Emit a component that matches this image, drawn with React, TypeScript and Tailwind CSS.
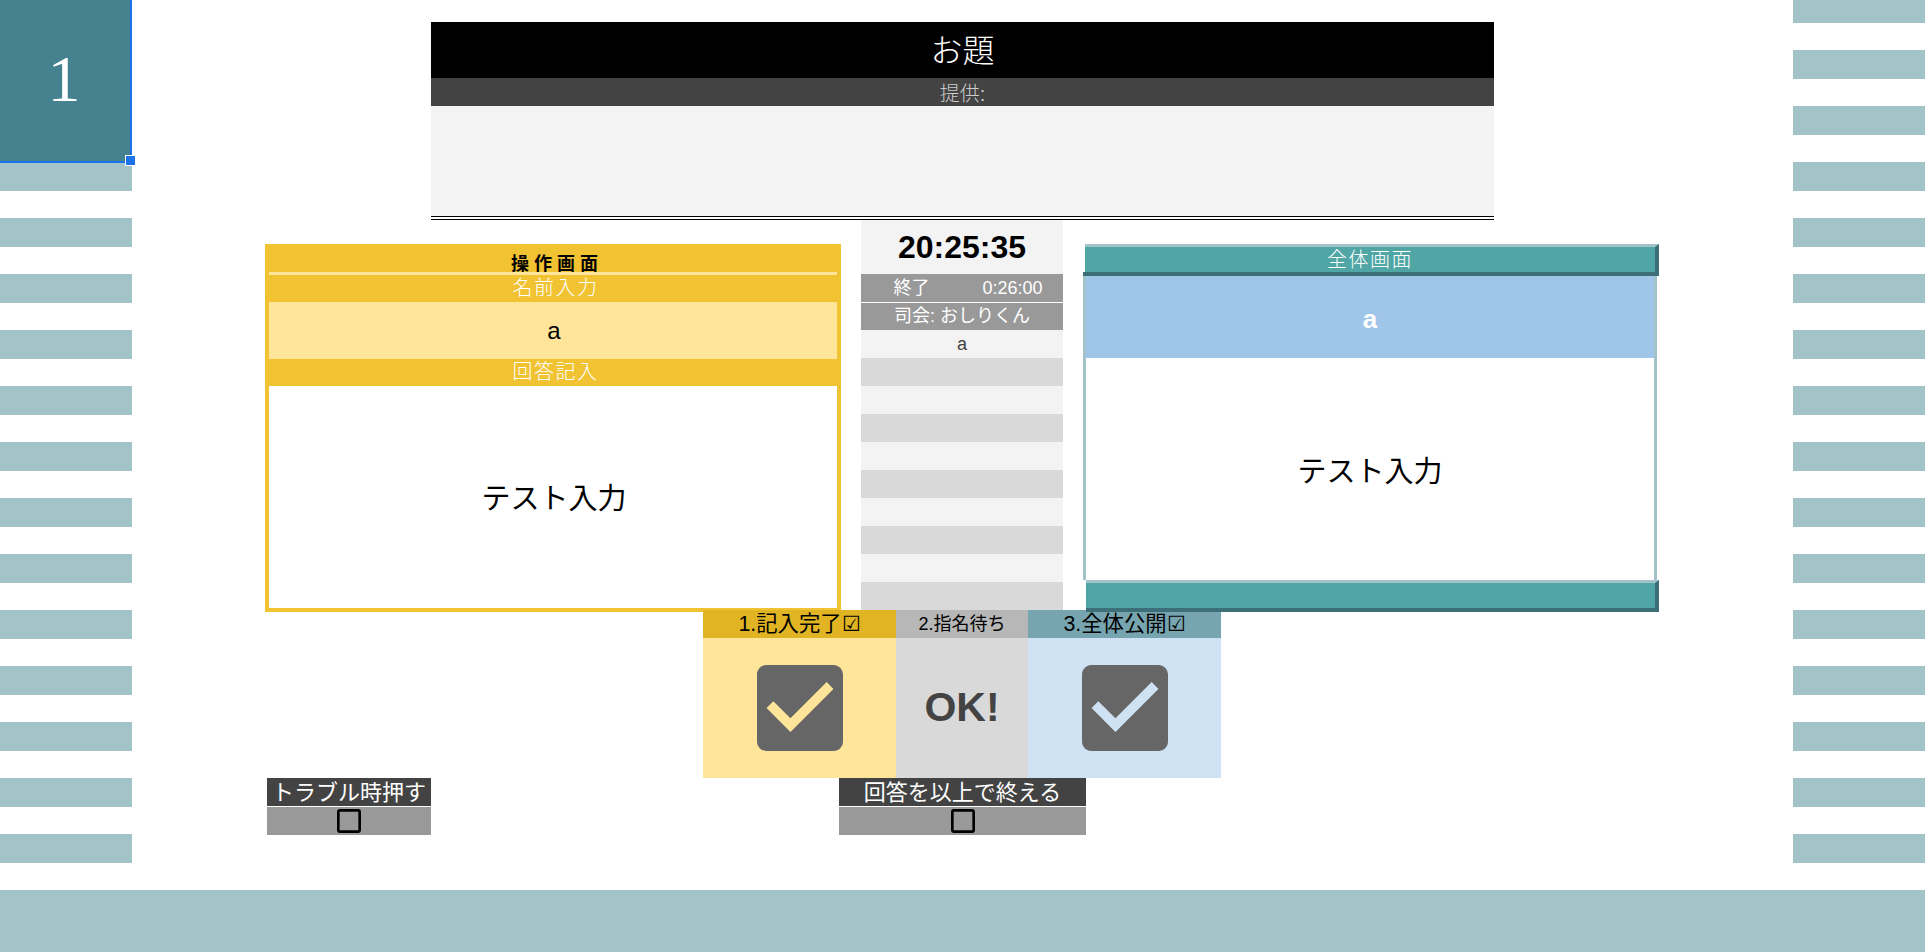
import React from 'react';

const leftStripes = Array.from({ length: 13 }, (_, i) => i);
const rightStripes = Array.from({ length: 15 }, (_, i) => i);
const listRows = ['a', '', '', '', '', '', '', '', '', ''];

function CheckedBox({ check }: { check: string }) {
    return (
        <div className={`w-[86px] h-[86px] ${check}`}>
            <svg viewBox="3 3 18 18" className="w-full h-full block">
                <path fill="currentColor" d="M5 5h14v14H5z" />
                <path
                    fill="#666666"
                    d="M19 3H5c-1.1 0-2 .9-2 2v14c0 1.1.9 2 2 2h14c1.1 0 2-.9 2-2V5c0-1.1-.9-2-2-2zm-9 14l-5-5 1.41-1.41L10 14.17l7.59-7.59L19 8l-9 9z"
                />
            </svg>
        </div>
    );
}

function EmptyBox() {
    return (
        <svg viewBox="3 3 18 18" className="w-6 h-6 block">
            <path
                fill="#000000"
                d="M19 5v14H5V5h14m0-2H5c-1.1 0-2 .9-2 2v14c0 1.1.9 2 2 2h14c1.1 0 2-.9 2-2V5c0-1.1-.9-2-2-2z"
            />
        </svg>
    );
}

function Toggle({ label, width }: { label: string; width: string }) {
    return (
        <div className={`${width} flex flex-col gap-px`}>
            <div className="h-[28px] bg-[#434343] text-white text-[22px] leading-[29px] text-center whitespace-nowrap">
                {label}
            </div>
            <div className="h-[28px] bg-[#999999] flex items-center justify-center">
                <EmptyBox />
            </div>
        </div>
    );
}

export default function App() {
    return (
        <div className="w-[1925px] h-[952px] overflow-hidden bg-white flex flex-col [font-family:'Liberation_Sans','Noto_Sans_CJK_JP',sans-serif]">
            <div className="h-[890px] flex">
                {/* left stripes */}
                <div className="w-[132px] shrink-0 flex flex-col">
                    <div className="relative z-10 h-[163px] -mb-px shrink-0 bg-[#45818e] border-r-2 border-b-2 border-[#1a73e8] flex items-center justify-center pb-[4px] pr-[2px] text-white text-[66px] [font-family:'Liberation_Serif',serif]">
                        1
                        <div className="absolute left-[125px] top-[155px] w-[11px] h-[11px] bg-[#1a73e8] border border-white" />
                    </div>
                    {leftStripes.map((i) => (
                        <div key={i} className="h-[29px] mb-[27px] shrink-0 bg-[#a2c4c9]" />
                    ))}
                </div>

                {/* main */}
                <div className="flex-1 flex flex-col">
                    <div className="ml-[299px] w-[1063px] mt-[22px]">
                        <div className="h-[56px] bg-black text-white text-[32px] font-light leading-[58px] text-center">お題</div>
                        <div className="h-[28px] bg-[#434343] text-[#cccccc] text-[20px] font-light leading-[32px] text-center">提供:</div>
                        <div className="h-[110px] bg-[#f3f3f3]" />
                        <div className="h-[4px] border-y border-black" />
                    </div>

                    <div className="h-[390px] flex items-start">
                        {/* operator panel */}
                        <div className="ml-[133px] mt-[24px] w-[576px] h-[368px] flex flex-col border-x-4 border-b-4 border-[#f1c232] bg-[#f1c232]">
                            <div className="h-[28px] shrink-0 text-black font-bold text-[18px] tracking-[5px] leading-[41px] text-center pl-[8px]">操作画面</div>
                            <div className="relative h-[3px] shrink-0 bg-[#ffe599]" />
                            <div className="h-[27px] shrink-0 text-white text-[20px] font-light tracking-[1.5px] leading-[27px] text-center pl-[5px]">名前入力</div>
                            <div className="h-[57px] shrink-0 bg-[#ffe599] text-black text-[24px] leading-[57px] text-center pl-[2px]">a</div>
                            <div className="h-[27px] shrink-0 text-white text-[20px] font-light tracking-[1.5px] leading-[27px] text-center pl-[5px]">回答記入</div>
                            <div className="flex-1 bg-white text-black text-[29px] flex items-center justify-center pt-[5px] pl-[2px]">テスト入力</div>
                        </div>

                        {/* middle list */}
                        <div className="ml-[20px] w-[202px] flex flex-col">
                            <div className="h-[54px] bg-[#f3f3f3] text-black font-bold text-[32px] leading-[54px] text-center">20:25:35</div>
                            <div className="h-[28px] bg-[#999999] text-white text-[18px] leading-[28px] flex">
                                <span className="w-1/2 text-center">終了</span>
                                <span className="w-1/2 text-center">0:26:00</span>
                            </div>
                            <div className="h-[27px] mt-px bg-[#999999] text-white text-[18px] leading-[27px] text-center">司会: おしりくん</div>
                            {listRows.map((name, i) => (
                                <div
                                    key={i}
                                    className={`h-[28px] text-[#434343] text-[18px] leading-[28px] text-center ${i % 2 === 0 ? 'bg-[#f3f3f3]' : 'bg-[#d9d9d9]'}`}
                                >
                                    {name}
                                </div>
                            ))}
                        </div>

                        {/* public panel, its lower edge lies over the status header */}
                        <div className="relative z-10 ml-[20px] mt-[24px] w-[576px] h-[368px] flex flex-col">
                            <div className="h-[28px] ml-[2px] shrink-0 bg-[#50a5a5] border-t-[3px] border-t-[#a2c4c9] border-r-4 border-r-[#3d6f79] text-white text-[20px] font-light tracking-[1.5px] leading-[26px] text-center">全体画面</div>
                            <div className="h-[4px] shrink-0 bg-[#3d6f79]" />
                            <div className="flex-1 flex flex-col border-x-[3px] border-[#a2c4c9] mr-[2px]">
                                <div className="h-[82px] shrink-0 bg-[#9fc5e8] text-white font-bold text-[26px] leading-[86px] text-center">a</div>
                                <div className="flex-1 bg-white text-black text-[29px] flex items-center justify-center pt-[8px]">テスト入力</div>
                            </div>
                            <div className="h-[32px] shrink-0 ml-[3px] bg-[#50a5a5] border-t-[3px] border-t-[#a2c4c9] border-r-4 border-r-[#3d6f79] border-b-4 border-b-[#3d6f79]" />
                        </div>
                    </div>

                    {/* status */}
                    <div className="ml-[571px] w-[518px] h-[168px] flex">
                        <div className="w-[193px] flex flex-col bg-[#ffe599]">
                            <div className="h-[28px] bg-[#e1b423] text-black text-[21.33px] leading-[28px] text-center whitespace-nowrap">1.記入完了☑</div>
                            <div className="flex-1 flex items-center justify-center">
                                <CheckedBox check="text-[#ffe599]" />
                            </div>
                        </div>
                        <div className="w-[132px] flex flex-col bg-[#d9d9d9]">
                            <div className="h-[28px] bg-[#b7b7b7] text-black text-[18px] leading-[28px] text-center whitespace-nowrap">2.指名待ち</div>
                            <div className="flex-1 flex items-center justify-center text-[#434343] font-bold text-[41px]">OK!</div>
                        </div>
                        <div className="w-[193px] flex flex-col bg-[#cfe2f3]">
                            <div className="h-[28px] bg-[#76a5af] text-black text-[21.33px] leading-[28px] text-center whitespace-nowrap">3.全体公開☑</div>
                            <div className="flex-1 flex items-center justify-center">
                                <CheckedBox check="text-[#cfe2f3]" />
                            </div>
                        </div>
                    </div>

                    {/* toggles */}
                    <div className="flex items-end h-[57px]">
                        <div className="ml-[135px]">
                            <Toggle label="トラブル時押す" width="w-[164px]" />
                        </div>
                        <div className="ml-[408px]">
                            <Toggle label="回答を以上で終える" width="w-[247px]" />
                        </div>
                    </div>
                </div>

                {/* right stripes */}
                <div className="w-[132px] shrink-0 flex flex-col">
                    <div className="h-[23px] mb-[27px] shrink-0 bg-[#a2c4c9]" />
                    {rightStripes.map((i) => (
                        <div key={i} className="h-[29px] mb-[27px] shrink-0 bg-[#a2c4c9]" />
                    ))}
                </div>
            </div>
            <div className="h-[62px] bg-[#a2c4c9]" />
        </div>
    );
}
